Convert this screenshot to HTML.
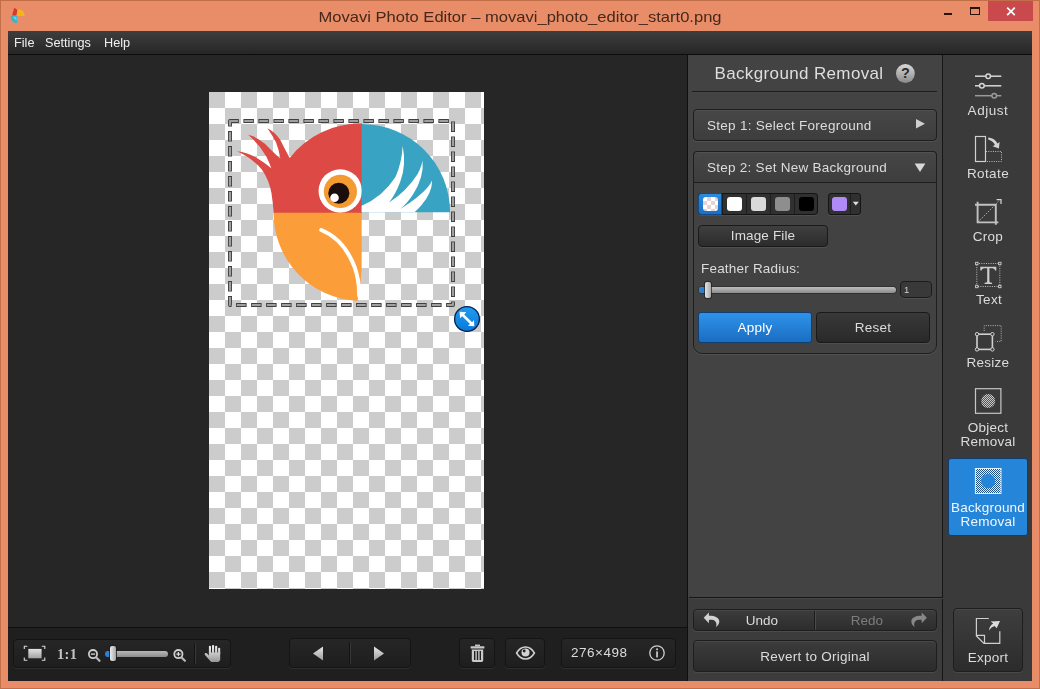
<!DOCTYPE html>
<html>
<head>
<meta charset="utf-8">
<title>Movavi Photo Editor</title>
<style>
*{box-sizing:border-box;margin:0;padding:0}
html,body{width:1040px;height:689px;overflow:hidden;background:#e98d68}
body{font-family:"Liberation Sans",sans-serif;position:relative;color:#dcdcdc;font-size:13.5px}
.abs{position:absolute}
.t{position:absolute;white-space:nowrap;line-height:1;will-change:transform}
.c{transform:translateX(-50%)}
#frame{left:0;top:0;width:1040px;height:689px;background:#e98d68;border:1px solid #c06f49}
#title{left:519.5px;top:10px;font-size:14.5px;color:#45281b;transform:translateX(-50%) scaleX(1.142)}
#closebtn{left:988px;top:1px;width:45px;height:20px;background:#c9494d}
#menubar{left:8px;top:31px;width:1024px;height:23px;background:linear-gradient(#3e3e3e,#262626)}
#menubar .t{top:5.5px;color:#f0f0f0;font-size:12.7px}
#menuline{left:8px;top:54px;width:1024px;height:1px;background:#0c0c0c}
#work{left:8px;top:55px;width:680px;height:573px;background:#262626}
#bottombar{left:8px;top:627px;width:680px;height:54px;background:#1f1f1f;border-top:1px solid #0f0f0f}
#panel{left:687px;top:55px;width:256px;height:626px;background:linear-gradient(#434343 0,#434343 542px,#3c3c3c 543px);border-left:1px solid #0f0f0f}
#tools{left:942px;top:55px;width:90px;height:626px;background:#3a3a3a;border-left:1px solid #161616}
#canvas{left:209px;top:92px;width:275px;height:497px;background-color:#fff;
 background-image:conic-gradient(#fff 25%,#ccc 0 50%,#fff 0 75%,#ccc 0);background-size:32px 32px}
.box{position:absolute;border:1px solid #1e1e1e;border-radius:4px;background:linear-gradient(#474747,#3d3d3d);box-shadow:0 1px 0 rgba(255,255,255,.08), inset 0 1px 0 rgba(255,255,255,.06)}
.dbox{position:absolute;border:1px solid #141414;border-radius:4px;background:linear-gradient(#2b2b2b,#1f1f1f);box-shadow:0 1px 0 rgba(255,255,255,.07)}
</style>
</head>
<body>
<div id="frame" class="abs"></div>
<div id="title" class="t c">Movavi Photo Editor – movavi_photo_editor_start0.png</div>
<svg class="abs" style="left:7px;top:5px" width="22" height="22" viewBox="0 0 20 20">
 <path d="M4.6,9.6 L6.6,2.6 L9.6,4.6 L8.4,9.6 Z" fill="#d9362c"/>
 <path d="M9.4,4.4 C13,3.4 16,6 16,10 L9,10 Z" fill="#f7b31e"/>
 <path d="M3.4,10 L9.2,10 L9.2,16.4 C6,16.6 3.2,13.6 3.4,10 Z" fill="#3bb0c9"/>
 <path d="M5.2,10.6 L8.6,10.6 L8.6,14.6 Z" fill="#7fd9e6" opacity=".8"/>
</svg>

<div id="closebtn" class="abs"></div>
<svg class="abs" style="left:1004px;top:5px" width="14" height="13" viewBox="0 0 14 13"><path d="M3.2,2.6 L10.8,10.2 M10.8,2.6 L3.2,10.2" stroke="#fff" stroke-width="1.7"/></svg>
<div class="abs" style="left:944px;top:13px;width:8px;height:2.4px;background:#2a130c"></div>
<div class="abs" style="left:970px;top:7px;width:10px;height:8px;border:1px solid #2a130c;border-top-width:2px"></div>

<div id="menubar" class="abs"><span class="t" style="left:5.5px">File</span><span class="t" style="left:37px">Settings</span><span class="t" style="left:96px">Help</span></div>
<div id="menuline" class="abs"></div>
<div id="work" class="abs"></div>
<div id="bottombar" class="abs"></div>
<div id="panel" class="abs"></div>
<div id="tools" class="abs"></div>
<div id="canvas" class="abs"></div>
<svg class="abs" style="left:209px;top:92px" width="276" height="498" viewBox="209 92 276 498">
 <defs><filter id="soft" x="-5%" y="-5%" width="110%" height="110%"><feGaussianBlur stdDeviation="0.4"/></filter></defs>
 <g filter="url(#soft)">
 <!-- red (coords from zoom A: origin 225,110 scale 6.264) -->
 <g transform="translate(225,110) scale(0.15964)">
  <path fill="#dd4a44" d="M858,85 A560,560 0 0 0 405,300 Q380,255 345,185 Q310,135 266,114 Q298,160 320,204 Q338,250 347,305 Q327,290 250,212 Q200,168 145,155 Q215,215 258,290 Q280,335 290,365 Q250,330 200,300 Q140,265 75,258 Q170,300 232,375 Q276,440 291,520 Q302,590 304,647 L858,647 Z"/>
  <circle cx="722" cy="507" r="136" fill="#fff"/>
  <circle cx="723" cy="510" r="104" fill="#f39a33"/>
  <circle cx="713" cy="521" r="66" fill="#1c0d08"/>
  <circle cx="686" cy="550" r="27" fill="#fff"/>
 </g>
 <!-- orange (zoom B: origin 225,200) -->
 <g transform="translate(225,200) scale(0.15964)">
  <path fill="#fb9d39" d="M304,80 A552,552 0 0 0 830,632 Q850,540 856,430 L856,80 Z"/>
  <path fill="none" stroke="#fff" stroke-width="25" stroke-linecap="round" d="M603,188 Q745,245 812,420 Q842,505 840,600"/>
 </g>
 <!-- blue (zoom C: origin 330,110) -->
 <g transform="translate(330,110) scale(0.15964)">
  <path fill="#38a3c2" d="M198,88 A552,552 0 0 1 752,640 L198,640 Z"/>
  <path fill="#fff" d="M198,600 Q330,545 410,420 Q450,330 455,225 Q480,340 440,450 Q410,530 370,580 Q480,510 550,400 Q575,350 580,315 Q590,420 520,530 Q480,590 440,620 Q560,545 615,480 Q632,460 640,440 Q640,520 570,600 Q550,622 530,640 L198,640 Z"/>
 </g>
 </g>
 <!-- selection rect -->
 <path d="M230,121 H453 V305 H230 Z" fill="none" stroke="#404040" stroke-width="4" stroke-dasharray="10.5 4.5" stroke-dashoffset="1.6" stroke-linejoin="round"/>
 <path d="M230,121 H453 V305 H230 Z" fill="none" stroke="#a0a0a0" stroke-width="2.2" stroke-dasharray="8.7 6.3" stroke-dashoffset="0.7" stroke-linejoin="round"/>
 <!-- handle -->
 <defs><linearGradient id="hg" x1="0" y1="0" x2="0" y2="1"><stop offset="0" stop-color="#1f9df2"/><stop offset="1" stop-color="#0b78d6"/></linearGradient></defs>
 <circle cx="467" cy="319" r="12.4" fill="url(#hg)" stroke="#06204d" stroke-width="1.3"/>
 <g fill="#fff" stroke="none">
  <path d="M459.6,311.8 L466.3,312.3 L464.2,314.4 L472.1,322.3 L474.0,320.0 L474.3,326.2 L467.8,325.8 L470.0,323.9 L462.2,316.2 L460.1,318.3 Z"/>
 </g>
</svg>

<div class="t c" style="left:799px;top:65px;font-size:17px;letter-spacing:.36px;color:#dedede">Background Removal</div>
<svg class="abs" style="left:895px;top:63px" width="21" height="21" viewBox="0 0 21 21"><defs><linearGradient id="qg" x1="0" y1="0" x2="0" y2="1"><stop offset="0" stop-color="#d8d8d8"/><stop offset="1" stop-color="#8a8a8a"/></linearGradient></defs><circle cx="10.4" cy="10.5" r="9.4" fill="url(#qg)"/><text x="10.4" y="15.3" text-anchor="middle" font-family="Liberation Sans" font-weight="bold" font-size="14.5" fill="#2c2c2c">?</text></svg>
<div class="abs" style="left:692px;top:91px;width:245px;height:1px;background:#1c1c1c"></div>
<div class="abs" style="left:692px;top:92px;width:245px;height:1px;background:#474747"></div>
<!-- step 1 -->
<div class="box" style="left:693px;top:109px;width:244px;height:32px"></div>
<div class="t" style="left:707px;top:119px;letter-spacing:.28px">Step 1: Select Foreground</div>
<svg class="abs" style="left:914px;top:118px" width="13" height="12"><path d="M2,1 L11,5.8 L2,10.6 Z" fill="#cfcfcf"/></svg>
<!-- step 2 -->
<div class="abs" style="left:693px;top:151px;width:244px;height:203px;border:1px solid #1e1e1e;border-radius:4px 4px 9px 9px;background:#424242;box-shadow:0 1px 0 rgba(255,255,255,.08)"></div>
<div class="box" style="left:693px;top:151px;width:244px;height:32px;border-radius:4px 4px 0 0;box-shadow:inset 0 1px 0 rgba(255,255,255,.06)"></div>
<div class="t" style="left:707px;top:161px;letter-spacing:.26px">Step 2: Set New Background</div>
<svg class="abs" style="left:913px;top:162px" width="14" height="11"><path d="M1.6,1.6 L12.4,1.6 L7,10 Z" fill="#d8d8d8"/></svg>
<!-- swatches -->
<div class="dbox" style="left:698px;top:193px;width:120px;height:22px;border-radius:3px;background:#303030"></div>
<div class="abs" style="left:698px;top:193px;width:24px;height:22px;border-radius:3px 0 0 3px;background:linear-gradient(#2a8be0,#1b6fc2);border:1px solid #114a86"></div>
<div class="abs" style="left:722px;top:194px;width:1px;height:20px;background:#1d1d1d"></div>
<div class="abs" style="left:746px;top:194px;width:1px;height:20px;background:#1d1d1d"></div>
<div class="abs" style="left:770px;top:194px;width:1px;height:20px;background:#1d1d1d"></div>
<div class="abs" style="left:794px;top:194px;width:1px;height:20px;background:#1d1d1d"></div>
<div class="abs" style="left:703px;top:197px;width:14.5px;height:14px;border-radius:3px;background:#fff conic-gradient(#e6d2d2 25%,#fff 0 50%,#e6d2d2 0 75%,#fff 0) 0 0/8px 8px"></div>
<div class="abs" style="left:727px;top:197px;width:14.5px;height:14px;border-radius:3px;background:#fff"></div>
<div class="abs" style="left:751px;top:197px;width:14.5px;height:14px;border-radius:3px;background:#dadada"></div>
<div class="abs" style="left:775px;top:197px;width:14.5px;height:14px;border-radius:3px;background:#8e8e8e"></div>
<div class="abs" style="left:799px;top:197px;width:14.5px;height:14px;border-radius:3px;background:#000"></div>
<div class="dbox" style="left:828px;top:193px;width:33px;height:22px;border-radius:3px;background:#303030"></div>
<div class="abs" style="left:850px;top:194px;width:1px;height:20px;background:#1d1d1d"></div>
<div class="abs" style="left:832px;top:197px;width:14.5px;height:14px;border-radius:3px;background:#b08af6"></div>
<svg class="abs" style="left:852px;top:201px" width="8" height="6"><path d="M0.8,0.8 L6.8,0.8 L3.8,4.6 Z" fill="#e0e0e0"/></svg>
<!-- image file -->
<div class="dbox" style="left:698px;top:225px;width:130px;height:22px;background:linear-gradient(#3f3f3f,#2c2c2c);border-color:#1a1a1a"></div>
<div class="t c" style="left:763px;top:229px;letter-spacing:.15px">Image File</div>
<div class="t" style="left:701px;top:262px;letter-spacing:.2px">Feather Radius:</div>
<!-- slider -->
<div class="abs" style="left:699px;top:287px;width:197px;height:6px;border-radius:3px;background:linear-gradient(#bdbdbd,#8c8c8c);box-shadow:0 0 0 1px rgba(40,40,40,.6)"></div>
<div class="abs" style="left:699px;top:287px;width:9px;height:6px;border-radius:3px 0 0 3px;background:#2a7fd0"></div>
<div class="abs" style="left:705px;top:282px;width:6px;height:16px;border-radius:2px;background:linear-gradient(90deg,#e4e4e4,#a8a8a8);box-shadow:0 0 0 1px rgba(30,30,30,.7)"></div>
<div class="dbox" style="left:900px;top:281px;width:32px;height:17px;background:#393939;border-color:#1c1c1c"></div>
<div class="t" style="left:903.5px;top:285px;font-size:9.5px;color:#d0d0d0">1</div>
<!-- apply / reset -->
<div class="abs" style="left:698px;top:312px;width:114px;height:31px;border-radius:3px;border:1px solid #0f3f75;background:linear-gradient(#2f93ea,#1a6dc1)"></div>
<div class="t c" style="left:755px;top:321px;color:#fff;letter-spacing:.2px">Apply</div>
<div class="dbox" style="left:816px;top:312px;width:114px;height:31px;background:linear-gradient(#393939,#292929);border-color:#191919"></div>
<div class="t c" style="left:873px;top:321px;letter-spacing:.2px">Reset</div>
<!-- bottom of panel -->
<div class="abs" style="left:689px;top:597px;width:254px;height:1px;background:#161616"></div>
<div class="abs" style="left:689px;top:598px;width:254px;height:1px;background:#464646"></div>
<div class="box" style="left:693px;top:609px;width:244px;height:22px;background:linear-gradient(#3c3c3c,#2d2d2d)"></div>
<div class="abs" style="left:814px;top:611px;width:1px;height:19px;background:#1c1c1c"></div>
<div class="abs" style="left:815px;top:611px;width:1px;height:19px;background:#4a4a4a"></div>
<div class="t c" style="left:762px;top:614px">Undo</div>
<div class="t c" style="left:867px;top:614px;color:#7d7d7d">Redo</div>
<svg class="abs" style="left:700px;top:610px" width="24" height="20" viewBox="700 610 24 20"><path d="M703.7,617.8 L708.9,612.5 L708.9,615.7 C714.2,615.5 719.4,617.4 719.3,621.6 C719.2,624 717.7,626 715.9,627.1 C716.8,624.7 716.6,622.8 715.4,621.4 C714,619.9 711.6,619.7 708.9,619.9 L708.9,623.2 Z" fill="#d2d2d2"/></svg>
<svg class="abs" style="left:907px;top:610px" width="24" height="20" viewBox="907 610 24 20"><g transform="translate(1630.6,0) scale(-1,1)"><path d="M703.7,617.8 L708.9,612.5 L708.9,615.7 C714.2,615.5 719.4,617.4 719.3,621.6 C719.2,624 717.7,626 715.9,627.1 C716.8,624.7 716.6,622.8 715.4,621.4 C714,619.9 711.6,619.7 708.9,619.9 L708.9,623.2 Z" fill="#888"/></g></svg>
<div class="box" style="left:693px;top:640px;width:244px;height:32px;background:linear-gradient(#3c3c3c,#2b2b2b)"></div>
<div class="t c" style="left:815px;top:650px;letter-spacing:.25px">Revert to Original</div>

<!-- Adjust -->
<svg class="abs" style="left:970px;top:68px" width="36" height="34" viewBox="970 68 36 34">
 <g stroke="#d6d6d6" stroke-width="1.5" fill="#3a3a3a">
  <path d="M975,76.2 H1001.3"/><circle cx="988.2" cy="76.2" r="2.3"/>
  <path d="M975,85.8 H1001.3"/><circle cx="981.9" cy="85.8" r="2.3"/>
 </g>
 <g stroke="#9a9a9a" stroke-width="1.5" fill="#3a3a3a"><path d="M975,95.7 H1001.3"/><circle cx="994.2" cy="95.7" r="2.3"/></g>
</svg>
<div class="t c" style="left:988px;top:104px;letter-spacing:.55px">Adjust</div>
<!-- Rotate -->
<svg class="abs" style="left:970px;top:132px" width="36" height="34" viewBox="970 132 36 34">
 <rect x="975.5" y="136.5" width="10" height="25" fill="none" stroke="#cfcfcf" stroke-width="1.2"/>
 <path d="M986,151.5 H1001.5 V161.5 H986" fill="none" stroke="#bdbdbd" stroke-width="1" stroke-dasharray="1 1.3"/>
 <path d="M988.2,137.6 C993,138.2 996.3,140.6 997.3,143.5 L999.6,142.1 L998.9,148.6 L992.6,146.2 L994.9,144.9 C994,142.6 991.6,140.6 988.2,139.6 Z" fill="#d2d2d2"/>
</svg>
<div class="t c" style="left:988px;top:167px;letter-spacing:.4px">Rotate</div>
<!-- Crop -->
<svg class="abs" style="left:970px;top:195px" width="36" height="34" viewBox="970 195 36 34">
 <g fill="none" stroke="#c2c2c2" stroke-width="1.9">
  <path d="M977.6,201.8 V222.4 H998.4"/><path d="M975,204.8 H995.8 V224.8"/>
 </g>
 <path d="M978.5,221.5 L999.5,200.5" stroke="#c4c4c4" stroke-width="1" stroke-dasharray="1.2 1.5" fill="none"/>
 <path d="M996.6,199.6 H1001 V204" fill="none" stroke="#d6d6d6" stroke-width="1.2"/>
</svg>
<div class="t c" style="left:988px;top:230px;letter-spacing:.25px">Crop</div>
<!-- Text -->
<svg class="abs" style="left:970px;top:258px" width="36" height="34" viewBox="970 258 36 34">
 <rect x="976.8" y="263.5" width="23" height="23" fill="none" stroke="#bfbfbf" stroke-width="1" stroke-dasharray="1 1.3"/>
 <g fill="#3a3a3a" stroke="#d0d0d0" stroke-width="0.9"><rect x="975.6" y="262.3" width="2.4" height="2.4"/><rect x="998.6" y="262.3" width="2.4" height="2.4"/><rect x="975.6" y="285.3" width="2.4" height="2.4"/><rect x="998.6" y="285.3" width="2.4" height="2.4"/></g>
 <path d="M980.3,266.8 H996.3 V270.6 H995.1 Q994.8,268.4 992.6,268.3 H989.4 V281.4 Q989.5,282.6 992,282.7 V283.9 H984.6 V282.7 Q987.1,282.6 987.2,281.4 V268.3 H984 Q981.8,268.4 981.5,270.6 H980.3 Z" fill="#cdcdcd"/>
</svg>
<div class="t c" style="left:988.5px;top:293px;letter-spacing:.25px">Text</div>
<!-- Resize -->
<svg class="abs" style="left:970px;top:321px" width="36" height="34" viewBox="970 321 36 34">
 <path d="M984.2,331 V325.6 H1001.2 V341.4 H995.5" fill="none" stroke="#b5b5b5" stroke-width="1" stroke-dasharray="1 1.3"/>
 <rect x="977" y="334.2" width="15.4" height="15.2" fill="none" stroke="#cfcfcf" stroke-width="1.6"/>
 <g fill="#3a3a3a" stroke="#d4d4d4" stroke-width="1"><circle cx="977" cy="334.2" r="1.7"/><circle cx="992.4" cy="334.2" r="1.7"/><circle cx="977" cy="349.4" r="1.7"/><circle cx="992.4" cy="349.4" r="1.7"/></g>
</svg>
<div class="t c" style="left:987.5px;top:356px;letter-spacing:.25px">Resize</div>
<!-- Object removal -->
<svg class="abs" style="left:970px;top:384px" width="36" height="34" viewBox="970 384 36 34">
 <defs><pattern id="dots" width="2" height="2" patternUnits="userSpaceOnUse"><rect width="1" height="1" fill="#c8c8c8"/><rect x="1" y="1" width="1" height="1" fill="#c8c8c8"/></pattern></defs>
 <rect x="975.5" y="388.7" width="25.4" height="24.6" fill="none" stroke="#c6c6c6" stroke-width="1.2"/>
 <circle cx="988.2" cy="401" r="7" fill="#555"/><circle cx="988.2" cy="401" r="7" fill="url(#dots)"/>
</svg>
<div class="t c" style="left:987.5px;top:421px;letter-spacing:.25px">Object</div>
<div class="t c" style="left:987.5px;top:435px;letter-spacing:.25px">Removal</div>
<!-- Background removal (selected) -->
<div class="abs" style="left:948px;top:458px;width:80px;height:78px;border-radius:3px;border:1px solid #123c6b;background:#2585d8"></div>
<svg class="abs" style="left:970px;top:464px" width="36" height="34" viewBox="970 464 36 34">
 <defs><pattern id="chk" width="2" height="2" patternUnits="userSpaceOnUse"><rect width="2" height="2" fill="#e6f3ff"/><rect width="1" height="1" fill="#1f4f88"/><rect x="1" y="1" width="1" height="1" fill="#1f4f88"/></pattern></defs>
 <rect x="975.4" y="468.5" width="25.6" height="25" fill="url(#chk)" stroke="#e4eef8" stroke-width="1"/>
 <circle cx="988.2" cy="481.2" r="7.1" fill="#2585d8"/>
</svg>
<div class="t c" style="left:988px;top:501px;color:#f2f7fc;letter-spacing:.2px">Background</div>
<div class="t c" style="left:987.5px;top:515px;color:#f2f7fc;letter-spacing:.25px">Removal</div>
<!-- Export -->
<div class="box" style="left:953px;top:608px;width:70px;height:64px;background:linear-gradient(#3e3e3e,#2c2c2c)"></div>
<svg class="abs" style="left:970px;top:614px" width="36" height="34" viewBox="970 614 36 34">
 <path d="M988.8,618.5 H976.4 V635.9 L983.9,643.4 H999.8 V631.2" fill="none" stroke="#cfcfcf" stroke-width="1.2"/>
 <path d="M976.4,635.4 H984.5 V643.4" fill="none" stroke="#cfcfcf" stroke-width="1.2"/>
 <path d="M1000,620.9 L990.6,621.5 L993.2,623.5 C990.6,625 989.2,627.4 989,630.6 C990.6,628.2 992.4,626.8 994.6,626.1 L996.7,628.2 Z" fill="#dcdcdc"/>
</svg>
<div class="t c" style="left:987.5px;top:651px;letter-spacing:.25px">Export</div>

<!-- group 1 -->
<div class="dbox" style="left:13px;top:639px;width:218px;height:29px;background:linear-gradient(#262626,#1e1e1e)"></div>
<svg class="abs" style="left:22px;top:643px" width="26" height="20" viewBox="22 643 26 20">
 <g fill="none" stroke="#d8d8d8" stroke-width="1.1"><path d="M24.3,649 V646.3 H27.3"/><path d="M41.8,646.3 H44.8 V649"/><path d="M24.3,657.6 V660.3 H27.3"/><path d="M41.8,660.3 H44.8 V657.6"/></g>
 <defs><linearGradient id="fg" x1="0" y1="0" x2="0" y2="1"><stop offset="0" stop-color="#e2e2e2"/><stop offset="1" stop-color="#a2a2a2"/></linearGradient></defs>
 <rect x="28.3" y="648.9" width="13.3" height="9.4" fill="url(#fg)"/>
</svg>
<div class="t" style="left:57px;top:647px;font-family:'Liberation Serif',serif;font-weight:bold;font-size:14.5px;color:#c4c4c4;letter-spacing:.3px">1:1</div>
<svg class="abs" style="left:86px;top:646px" width="16" height="18" viewBox="86 646 16 18"><circle cx="93" cy="654.1" r="4.1" fill="none" stroke="#cdcdcd" stroke-width="1.8"/><path d="M90.9,654.1 H95.1" stroke="#d8d8d8" stroke-width="1.3"/><path d="M96.5,657.7 L99.5,660.8" stroke="#b8b8b8" stroke-width="2.2" stroke-linecap="round"/></svg>
<div class="abs" style="left:106px;top:651px;width:62px;height:6px;border-radius:3px;background:linear-gradient(#b8b8b8,#8c8c8c)"></div>
<div class="abs" style="left:105px;top:651px;width:6px;height:6px;border-radius:3px 0 0 3px;background:#2a80d2"></div>
<div class="abs" style="left:110px;top:646px;width:6px;height:15px;border-radius:2px;background:linear-gradient(90deg,#ececec,#a5a5a5);box-shadow:0 0 0 1px rgba(25,25,25,.8)"></div>
<svg class="abs" style="left:171px;top:646px" width="16" height="18" viewBox="171 646 16 18"><circle cx="178.4" cy="654.1" r="4.1" fill="none" stroke="#cdcdcd" stroke-width="1.8"/><path d="M176.3,654.1 H180.5 M178.4,652 V656.2" stroke="#d8d8d8" stroke-width="1.3"/><path d="M181.9,657.7 L184.9,660.8" stroke="#b8b8b8" stroke-width="2.2" stroke-linecap="round"/></svg>
<div class="abs" style="left:194px;top:643px;width:1px;height:21px;background:#131313"></div>
<div class="abs" style="left:195px;top:643px;width:1px;height:21px;background:#383838"></div>
<svg class="abs" style="left:202px;top:642px" width="22" height="23" viewBox="202 642 22 23">
 <defs><linearGradient id="hd" x1="0" y1="645" x2="0" y2="662" gradientUnits="userSpaceOnUse"><stop offset="0" stop-color="#f6f6f6"/><stop offset="1" stop-color="#969696"/></linearGradient></defs>
 <g fill="url(#hd)">
  <rect x="208.9" y="645.8" width="2.1" height="9" rx="1"/><rect x="212" y="644.9" width="2.1" height="10" rx="1"/><rect x="215.1" y="645.8" width="2.1" height="9" rx="1"/><rect x="218.1" y="647.8" width="2.1" height="7" rx="1"/>
  <path d="M208.9,652.6 L220.2,652.6 L220.2,660.2 L218.3,662.1 L211.1,662.1 L204.8,654.7 Q204.3,653.5 205.5,653.1 Q206.4,652.9 207.1,653.6 L208.9,655.6 Z"/>
 </g>
</svg>
<!-- group 2 -->
<div class="dbox" style="left:289px;top:638px;width:122px;height:30px;background:linear-gradient(#262626,#1e1e1e)"></div>
<div class="abs" style="left:349px;top:642px;width:1px;height:22px;background:#131313"></div>
<div class="abs" style="left:350px;top:642px;width:1px;height:22px;background:#363636"></div>
<svg class="abs" style="left:312px;top:646px" width="12" height="15"><defs><linearGradient id="ag" x1="0" y1="0" x2="0" y2="1"><stop offset="0" stop-color="#e6e6e6"/><stop offset="1" stop-color="#9c9c9c"/></linearGradient></defs><path d="M11,0.6 V14.6 L1,7.6 Z" fill="url(#ag)"/></svg>
<svg class="abs" style="left:373px;top:646px" width="12" height="15"><path d="M1,0.6 V14.6 L11,7.6 Z" fill="url(#ag)"/></svg>
<!-- trash -->
<div class="dbox" style="left:459px;top:638px;width:36px;height:30px;background:linear-gradient(#262626,#1e1e1e)"></div>
<svg class="abs" style="left:469px;top:644px" width="17" height="19" viewBox="0 0 17 19"><g fill="#c9c9c9"><rect x="6" y="0.6" width="5" height="1.6"/><rect x="1.6" y="2.2" width="13.8" height="2.2" rx=".5"/><path d="M2.8,5.4 H14.2 V16.6 a1.4,1.4 0 0 1 -1.4,1.4 H4.2 a1.4,1.4 0 0 1 -1.4,-1.4 Z M5,7 V16 H6.4 V7 Z M7.8,7 V16 H9.2 V7 Z M10.6,7 V16 H12 V7 Z" fill-rule="evenodd"/></g></svg>
<!-- eye -->
<div class="dbox" style="left:505px;top:638px;width:40px;height:30px;background:linear-gradient(#262626,#1e1e1e)"></div>
<svg class="abs" style="left:515px;top:645px" width="21" height="16" viewBox="0 0 21 16"><path d="M1.6,8 C4.4,3.2 7.6,2 10.5,2 C13.4,2 16.6,3.2 19.4,8 C16.6,12.8 13.4,14 10.5,14 C7.6,14 4.4,12.8 1.6,8 Z" fill="none" stroke="#d2d2d2" stroke-width="1.5"/><circle cx="10.5" cy="7.4" r="4" fill="#d2d2d2"/><circle cx="9.2" cy="6" r="1.4" fill="#222"/></svg>
<!-- size -->
<div class="dbox" style="left:561px;top:638px;width:115px;height:30px;background:linear-gradient(#262626,#1e1e1e)"></div>
<div class="t" style="left:571px;top:646px;letter-spacing:.5px">276×498</div>
<svg class="abs" style="left:648px;top:644px" width="18" height="18" viewBox="0 0 18 18"><circle cx="9" cy="9" r="7.2" fill="none" stroke="#cfcfcf" stroke-width="1.3"/><rect x="8.2" y="7.4" width="1.7" height="6" fill="#cfcfcf"/><rect x="8.2" y="4.4" width="1.7" height="1.8" fill="#cfcfcf"/></svg>

</body>
</html>
